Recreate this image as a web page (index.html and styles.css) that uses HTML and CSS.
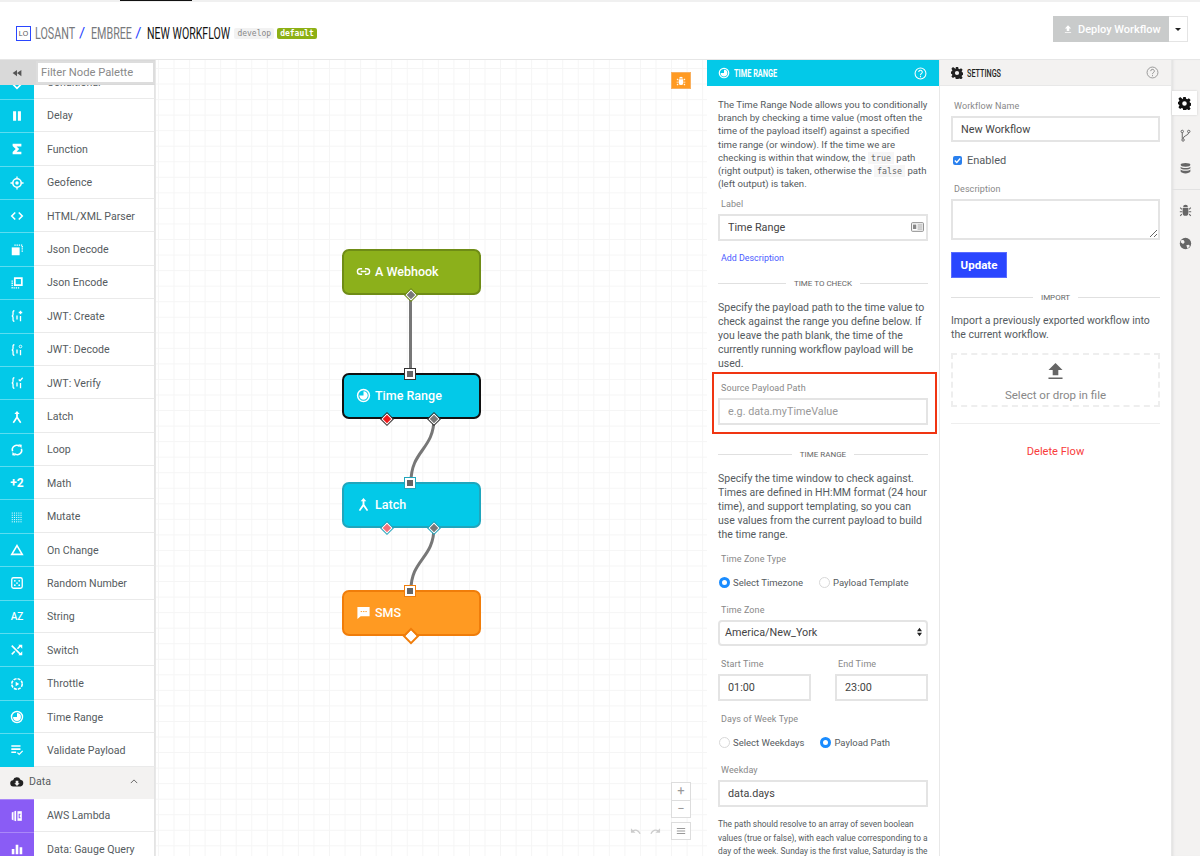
FILE: index.html
```html
<!DOCTYPE html>
<html lang="en">
<head>
<meta charset="utf-8">
<title>New Workflow</title>
<link rel="stylesheet" href="styles.css">
</head>
<body>
<header class="topbar">
  <div class="strip"><span class="strip-mark"></span></div>
  <div class="crumbs">
    <span class="logo">LO</span>
    <span class="crumb w-losant">LOSANT</span><span class="slash">/</span>
    <span class="crumb w-embree">EMBREE</span><span class="slash">/</span>
    <span class="crumb current w-new">NEW WORKFLOW</span>
    <span class="badge">develop</span>
    <span class="badge green">default</span>
  </div>
  <div class="deploy">
    <span class="deploy-btn"><svg class="ic10" viewBox="0 0 16 16"><path d="M8 2l5 5h-3v4H6V7H3zM3 13h10v1.5H3z" fill="#fff"/></svg>Deploy Workflow</span>
    <span class="deploy-caret"><svg class="caret" viewBox="0 0 8 4"><path d="M0 0h8L4 4z" fill="#222"/></svg></span>
  </div>
</header>
<main class="main">
  <aside class="palette">
    <div class="pal-tools">
      <span class="collapse"><svg class="ic10" viewBox="0 0 16 16"><path d="M8 3v10L1 8zM15 3v10L8 8z" fill="#555"/></svg></span>
      <input class="pal-filter" type="text" placeholder="Filter Node Palette">
    </div>
    <div class="pal-list">
      <div class="item"><span class="cell"><svg class="ic" viewBox="0 0 16 16"><path d="M8 2l6 6-6 6-6-6z" fill="none" stroke="#fff" stroke-width="2"/></svg></span>Conditional</div>
      <div class="item"><span class="cell"><svg class="ic" viewBox="0 0 16 16"><path d="M3.500 2.500h3.500v11h-3.500zM9 2.500h3.500v11H9z" fill="#fff"/></svg></span>Delay</div>
      <div class="item"><span class="cell"><svg class="ic" viewBox="0 0 16 16"><path d="M3 2h10v3H7.500l3 3-3 3H13v3H3v-2.500L6.500 8 3 4.500z" fill="#fff"/></svg></span>Function</div>
      <div class="item"><span class="cell"><svg class="ic" viewBox="0 0 16 16"><circle cx="8" cy="8" r="4.800" fill="none" stroke="#fff" stroke-width="1.800"/><circle cx="8" cy="8" r="2" fill="#fff"/><path d="M8 .5v2.500M8 13v2.500M.5 8H3M13 8h2.500" stroke="#fff" stroke-width="1.500"/></svg></span>Geofence</div>
      <div class="item"><span class="cell"><svg class="ic" viewBox="0 0 16 16"><path d="M6 4L2 8l4 4M10 4l4 4-4 4" fill="none" stroke="#fff" stroke-width="1.800"/></svg></span>HTML/XML Parser</div>
      <div class="item"><span class="cell"><svg class="ic" viewBox="0 0 16 16"><path d="M2 5h9v9H2z" fill="#fff"/><path d="M5 2.500h9v8.500" fill="none" stroke="#fff" stroke-width="1.500" stroke-dasharray="1.500 1"/></svg></span>Json Decode</div>
      <div class="item"><span class="cell"><svg class="ic" viewBox="0 0 16 16"><path d="M5.500 2.500h8v8h-8z" fill="none" stroke="#fff" stroke-width="2"/><path d="M2.500 5v8.500H11" fill="none" stroke="#fff" stroke-width="1.500" stroke-dasharray="1.500 1"/></svg></span>Json Encode</div>
      <div class="item"><span class="cell"><svg class="ic" viewBox="0 0 16 16"><use href="#brace"/><path d="M12 2v4M10 4h4M12 8v6" stroke="#fff" stroke-width="1.500"/></svg></span>JWT: Create</div>
      <div class="item"><span class="cell"><svg class="ic" viewBox="0 0 16 16"><use href="#brace"/><circle cx="12" cy="4" r="1.500" fill="none" stroke="#fff"/><path d="M12 8v6" stroke="#fff" stroke-width="1.500"/></svg></span>JWT: Decode</div>
      <div class="item"><span class="cell"><svg class="ic" viewBox="0 0 16 16"><use href="#brace"/><path d="M10 4l1.500 1.500L14.500 2M12 8v6" fill="none" stroke="#fff" stroke-width="1.500"/></svg></span>JWT: Verify</div>
      <div class="item"><span class="cell"><svg class="ic" viewBox="0 0 16 16"><use href="#latch"/></svg></span>Latch</div>
      <div class="item"><span class="cell"><svg class="ic" viewBox="0 0 16 16"><path d="M3 9.500A5 5 0 0 1 11 4M13 6.500A5 5 0 0 1 5 12" fill="none" stroke="#fff" stroke-width="1.800"/><path d="M9.500 1.500l4 .5-.5 4zM6.500 14.500l-4-.5.5-4z" fill="#fff"/></svg></span>Loop</div>
      <div class="item"><span class="cell cell-text">+2</span>Math</div>
      <div class="item"><span class="cell"><svg class="ic" viewBox="0 0 16 16"><path d="M2 3.500h12M2 6h12M2 8.500h12M2 11h12M2 13.500h12" stroke="#fff" stroke-width="1.100" stroke-dasharray="1.200 1.300"/></svg></span>Mutate</div>
      <div class="item"><span class="cell"><svg class="ic" viewBox="0 0 16 16"><path d="M8 3l6 10H2z" fill="none" stroke="#fff" stroke-width="1.800"/></svg></span>On Change</div>
      <div class="item"><span class="cell"><svg class="ic" viewBox="0 0 16 16"><rect x="2" y="2" width="12" height="12" rx="2" fill="none" stroke="#fff" stroke-width="1.500"/><path d="M5.500 5.500h.01M10.500 5.500h.01M8 8h.01M5.500 10.500h.01M10.500 10.500h.01" stroke="#fff" stroke-width="2" stroke-linecap="round"/></svg></span>Random Number</div>
      <div class="item"><span class="cell cell-text small">AZ</span>String</div>
      <div class="item"><span class="cell"><svg class="ic" viewBox="0 0 16 16"><path d="M2 3l10 10M2 13l3.500-3.500M8.500 6.500L12 3" fill="none" stroke="#fff" stroke-width="1.800"/><path d="M9.500 2H14v4.500zM9.500 14H14V9.500z" fill="#fff"/></svg></span>Switch</div>
      <div class="item"><span class="cell"><svg class="ic" viewBox="0 0 16 16"><circle cx="8" cy="8" r="6" fill="none" stroke="#fff" stroke-width="1.800" stroke-dasharray="3.500 1.200"/><path d="M6.500 5.500v5l4-2.500z" fill="#fff"/></svg></span>Throttle</div>
      <div class="item"><span class="cell"><svg class="ic" viewBox="0 0 16 16"><use href="#clock"/></svg></span>Time Range</div>
      <div class="item"><span class="cell"><svg class="ic" viewBox="0 0 16 16"><path d="M1.500 3.500H12M1.500 7H12M1.500 10.500H7" stroke="#fff" stroke-width="1.800"/><path d="M8.500 11l2 2 4-4" fill="none" stroke="#fff" stroke-width="1.500"/></svg></span>Validate Payload</div>
      <div class="group"><svg class="ic-data" viewBox="0 0 16 16"><path d="M4 13a3.500 3.500 0 0 1-.5-7A4.500 4.500 0 0 1 12 5.500 3.800 3.800 0 0 1 12 13z" fill="#222"/><path d="M6.500 6.500h3v3H11L8 12.500 5 9.500h1.500z" fill="#f3f2f1"/></svg><span class="group-name">Data</span><svg class="chev" viewBox="0 0 10 6"><path d="M1 5l4-4 4 4" fill="none" stroke="#666" stroke-width="1.200"/></svg></div>
      <div class="item data"><span class="cell"><svg class="ic" viewBox="0 0 16 16"><path d="M2 4l2-1v10l-2-1zM5 2.500l2-.5v12l-2-.5z" fill="#fff"/><path d="M8.500 2.500h5v11h-5z" fill="#fff"/><path d="M12 6H10.500v4H12" fill="none" stroke="#8a5cf5" stroke-width="1.200"/></svg></span>AWS Lambda</div>
      <div class="item data"><span class="cell"><svg class="ic" viewBox="0 0 16 16"><path d="M2 8h3v6H2zM6.500 3h3v11h-3zM11 6h3v8h-3z" fill="#fff"/></svg></span>Data: Gauge Query</div>
    </div>
  </aside>

  <section class="canvas">
    <svg class="wires" width="551" height="796" viewBox="0 0 551 796">
      <path d="M254.500 234V313M278 358C278 390 255 390 255 422M278 467C278 499 255 499 255 530" fill="none" stroke="#777" stroke-width="3"/>
    </svg>
    <div class="node webhook"><svg class="node-ic" viewBox="0 0 16 16"><path d="M6.500 5H4.500a3 3 0 0 0 0 6h2M9.500 5h2a3 3 0 0 1 0 6h-2M5 8h6" fill="none" stroke="#fff" stroke-width="1.500"/></svg>A Webhook<span class="port out mid"></span></div>
    <div class="node range"><svg class="node-ic" viewBox="0 0 16 16"><use href="#clock"/></svg>Time Range<span class="port in"></span><span class="port out left red"></span><span class="port out right"></span></div>
    <div class="node latch"><svg class="node-ic" viewBox="0 0 16 16"><use href="#latch"/></svg>Latch<span class="port in"></span><span class="port out left pink"></span><span class="port out right"></span></div>
    <div class="node sms"><svg class="node-ic" viewBox="0 0 16 16"><path d="M1.500 2h13v10H5l-3.500 3z" fill="#fff"/><path d="M5 7h1.500M7.500 7H9M10 7h1.500" stroke="#ff9a22"/></svg>SMS<span class="port in"></span><span class="port out mid blank"></span></div>
    <span class="bug-btn"><svg class="ic10" viewBox="0 0 16 16"><use href="#bug" fill="#fff"/></svg></span>
    <div class="zoom-box">
      <span class="zoom-key">+</span>
      <span class="zoom-key">−</span>
    </div>
    <div class="history">
      <svg class="hist-ic" viewBox="0 0 12 8"><path d="M11 7C9 3 6 2 3 4" fill="none" stroke="#ccc" stroke-width="1.500"/><path d="M1 1v5h5z" fill="#ccc"/></svg>
      <svg class="hist-ic" viewBox="0 0 12 8"><path d="M1 7C3 3 6 2 9 4" fill="none" stroke="#ccc" stroke-width="1.500"/><path d="M11 1v5H6z" fill="#ccc"/></svg>
      <span class="menu-key"><svg class="ic10" viewBox="0 0 12 10"><path d="M1 2h10M1 5h10M1 8h10" stroke="#999" stroke-width="1.300"/></svg></span>
    </div>
  </section>

  <section class="panel node-panel">
    <div class="panel-head cyan"><svg class="head-ic" viewBox="0 0 16 16"><use href="#clock"/></svg><span class="head-title">TIME RANGE</span><svg class="help" viewBox="0 0 16 16"><circle cx="8" cy="8" r="6.700" fill="none" stroke="#fff" stroke-width="1.300"/><path d="M5.800 6.300a2.200 2.200 0 1 1 3.300 1.900C8.300 8.700 8 9.100 8 10M8 11.200v1.400" fill="none" stroke="#fff" stroke-width="1.300"/></svg></div>
    <div class="panel-body np-body">
      <p class="para tight">The Time Range Node allows you to conditionally<br>branch by checking a time value (most often the<br>time of the payload itself) against a specified<br>time range (or window). If the time we are<br>checking is within that window, the <code>true</code> path<br>(right output) is taken, otherwise the <code>false</code> path<br>(left output) is taken.</p>
      <label class="lbl m8">Label</label>
      <div class="input-wrap">
        <input class="field" type="text" value="Time Range">
        <svg class="field-ic" viewBox="0 0 16 12"><rect x=".7" y=".7" width="14.600" height="10.600" rx="1" fill="none" stroke="#888" stroke-width="1.200"/><path d="M2.500 3h4v5.500h-4z" fill="#888"/><path d="M8 3.500h6M8 6h6M8 8.500h6" stroke="#888"/></svg>
      </div>
      <a class="add-desc">Add Description</a>
      <div class="divider m13"><span>TIME TO CHECK</span></div>
      <p class="para m12">Specify the payload path to the time value to<br>check against the range you define below. If<br>you leave the path blank, the time of the<br>currently running workflow payload will be<br>used.</p>
      <div class="callout">
        <label class="lbl">Source Payload Path</label>
        <input class="field" type="text" placeholder="e.g. data.myTimeValue">
      </div>
      <div class="divider m14"><span>TIME RANGE</span></div>
      <p class="para m12">Specify the time window to check against.<br>Times are defined in HH:MM format (24 hour<br>time), and support templating, so you can<br>use values from the current payload to build<br>the time range.</p>
      <label class="lbl m11">Time Zone Type</label>
      <div class="radios">
        <span class="radio-row"><span class="radio on"></span>Select Timezone</span>
        <span class="radio-row"><span class="radio"></span>Payload Template</span>
      </div>
      <label class="lbl m16">Time Zone</label>
      <div class="select">America/New_York<svg class="sel-arrows" viewBox="0 0 6 12"><path d="M0 5l3-4 3 4zM0 7l3 4 3-4z" fill="#222"/></svg></div>
      <div class="times">
        <div class="time-col"><label class="lbl">Start Time</label><input class="field" type="text" value="01:00"></div>
        <div class="time-col"><label class="lbl">End Time</label><input class="field" type="text" value="23:00"></div>
      </div>
      <label class="lbl m12">Days of Week Type</label>
      <div class="radios">
        <span class="radio-row"><span class="radio"></span>Select Weekdays</span>
        <span class="radio-row"><span class="radio on"></span>Payload Path</span>
      </div>
      <label class="lbl m16">Weekday</label>
      <input class="field" type="text" value="data.days">
      <p class="para note">The path should resolve to an array of seven boolean<br>values (true or false), with each value corresponding to a<br>day of the week. Sunday is the first value, Saturday is the</p>
    </div>
  </section>

  <section class="panel settings">
    <div class="panel-head grey"><svg class="head-ic" viewBox="0 0 16 16"><use href="#gear" fill="#222"/></svg><span class="head-title">SETTINGS</span><svg class="help" viewBox="0 0 16 16"><circle cx="8" cy="8" r="6.700" fill="none" stroke="#888" stroke-width="1"/><path d="M5.800 6.300a2.200 2.200 0 1 1 3.300 1.900C8.300 8.700 8 9.100 8 10M8 11.200v1.400" fill="none" stroke="#888" stroke-width="1.100"/></svg></div>
    <div class="panel-body st-body">
      <label class="lbl">Workflow Name</label>
      <input class="field" type="text" value="New Workflow">
      <div class="enabled"><span class="check"><svg viewBox="0 0 10 10"><path d="M2 5l2.200 2.200L8 2.800" fill="none" stroke="#fff" stroke-width="1.500"/></svg></span>Enabled</div>
      <label class="lbl m16">Description</label>
      <textarea class="area"></textarea>
      <button class="update" type="button">Update</button>
      <div class="divider m13"><span>IMPORT</span></div>
      <p class="para m11">Import a previously exported workflow into<br>the current workflow.</p>
      <div class="drop">
        <svg class="drop-ic" viewBox="0 0 16 18"><path d="M8 0l7.500 7.500H11V13H5V7.500H.5zM.5 15.500h15V17H.5z" fill="#666"/></svg>
        <span>Select or drop in file</span>
      </div>
      <hr class="rule">
      <a class="delete">Delete Flow</a>
    </div>
  </section>

  <nav class="rail">
    <span class="tab active"><svg class="rail-ic" viewBox="0 0 16 16"><use href="#gear" fill="#111"/></svg></span>
    <span class="tab"><svg class="rail-ic" viewBox="0 0 16 16"><circle cx="4" cy="3" r="1.500" fill="none" stroke="#666" stroke-width="1.200"/><circle cx="12" cy="3" r="1.500" fill="none" stroke="#666" stroke-width="1.200"/><circle cx="5" cy="13.500" r="1.500" fill="none" stroke="#666" stroke-width="1.200"/><path d="M4 4.500V12M12 4.500C12 8 5 8 5 12" fill="none" stroke="#666" stroke-width="1.200"/></svg></span>
    <span class="tab"><svg class="rail-ic" viewBox="0 0 16 16"><ellipse cx="8" cy="3.500" rx="6" ry="2.300" fill="#666"/><path d="M2 5.800c1 2 11 2 12 0v2c-1 2-11 2-12 0zM2 9.300c1 2 11 2 12 0v2.500c-1 3-11 3-12 0z" fill="#666"/></svg></span>
    <span class="rail-sep"></span>
    <span class="tab"><svg class="rail-ic" viewBox="0 0 16 16"><use href="#bug" fill="#666"/></svg></span>
    <span class="tab"><svg class="rail-ic" viewBox="0 0 16 16"><circle cx="8" cy="8" r="7" fill="#666"/><path d="M3 3.500l3 .5 1 2.500-2 2-3-2zM9 10l3-.5 1.500 1.500-3 3.500z" fill="#f3f2f1"/></svg></span>
  </nav>
</main>

<svg class="defs" width="0" height="0" aria-hidden="true">
  <symbol id="clock" viewBox="0 0 16 16">
    <circle cx="8" cy="8" r="6.300" fill="none" stroke="#fff" stroke-width="1.600"/>
    <path d="M8 3.500A4.500 4.500 0 1 1 3.500 8H8z" fill="#fff"/>
  </symbol>
  <symbol id="latch" viewBox="0 0 16 16">
    <path d="M8 1l3 3.500H9V8l4 6-1.500 1L8 10l-3.500 5L3 14l4-6V4.500H5z" fill="#fff"/>
  </symbol>
  <symbol id="brace" viewBox="0 0 16 16">
    <path d="M5 2C3 2 3.500 4 3.500 6S2 8 2 8s1.500 0 1.500 2-.5 4 1.500 4" fill="none" stroke="#fff" stroke-width="1.500"/>
    <path d="M8 5v.01M8 7.500V12" stroke="#fff" stroke-width="1.500"/>
  </symbol>
  <symbol id="gear" viewBox="0 0 16 16">
    <path fill-rule="evenodd" d="M6.500 0h3l.5 2.300 1.400.6 2-1.300 2.100 2.100-1.300 2 .6 1.400 2.200.4v3l-2.200.5-.6 1.400 1.300 2-2.100 2.100-2-1.300-1.400.6-.5 2.200h-3L6 14l-1.400-.6-2 1.300-2.100-2.100 1.300-2L1.200 9.200 0 9V6l1.200-.4.6-1.400-1.300-2L2.600.1l2 1.300L6 2.800zM8 5.200a2.800 2.800 0 1 0 0 5.600 2.800 2.800 0 0 0 0-5.600z"/>
  </symbol>
  <symbol id="bug" viewBox="0 0 16 16">
    <path d="M5 4a3 3 0 0 1 6 0zM4.500 5h7v6a3.500 3.500 0 0 1-7 0zM1 5l1-1 2 2-1 1zM15 5l-1-1-2 2 1 1zM1 9h3v1.300H1zM12 9h3v1.300h-3zM1 14l2-2 1 1-2 2zM15 14l-2-2-1 1 2 2z"/>
  </symbol>
</svg>
</body>
</html>
```

FILE: styles.css
```css
* { box-sizing: border-box; }
html, body { margin: 0; height: 100%; overflow: hidden; }
body {
  display: flex;
  flex-direction: column;
  height: 856px;
  font-family: Roboto, "Open Sans", "Liberation Sans", sans-serif;
  font-size: 11px;
  color: #555b60;
  background: #fff;
}
.defs { position: absolute; }

/* top bar */
.topbar {
  position: relative;
  flex: 0 0 60px;
  display: flex;
  align-items: center;
  justify-content: space-between;
  padding: 0 12px 0 16px;
  border-bottom: 1px solid #e6e6e6;
}
.strip { position: absolute; left: 0; right: 0; top: 0; height: 2px; background: #f0f0f0; }
.strip-mark { display: block; margin-left: 120px; width: 72px; height: 1px; background: #111; }
.crumbs { display: flex; align-items: center; margin-top: 7px; }
.logo {
  display: inline-flex; align-items: center; justify-content: center;
  width: 15px; height: 15px; margin-right: 4px;
  border: 1.500px solid #2a46ff; color: #555;
  font: 7px "Liberation Sans", sans-serif;
}
.crumb {
  display: inline-block; white-space: nowrap;
  font: 16px Roboto, sans-serif; color: #77797c;
  transform: scaleX(.67); transform-origin: left center;
}
.crumb.current { color: #111; }
.w-losant { width: 39px; }
.w-embree { width: 39px; }
.w-new { width: 84px; transform: scaleX(.66); }
.slash { font: 15px Roboto, sans-serif; color: #2a46ff; margin: 0 6px 0 5px; }
.badge {
  margin-left: 3px; padding: 0 3px; height: 11px;
  font: 8px/11px "DejaVu Sans Mono", "Liberation Mono", monospace;
  background: #f2f2f2; color: #888; border-radius: 2px;
}
.badge.green { background: #8db015; color: #fff; font-weight: bold; }
.deploy { display: flex; height: 26px; margin-top: -1px; }
.deploy-btn {
  display: flex; align-items: center; gap: 5px; padding: 0 9px 0 10px; width: 116px;
  background: #c9cbcb; color: #fff; font-weight: 500; font-size: 11px; white-space: nowrap;
}
.deploy-caret {
  display: flex; align-items: center; justify-content: center; width: 19px;
  border: 1px solid #e4e4e4; border-left: 0;
}
.caret { width: 6px; height: 3px; }
.ic10 { width: 10px; height: 10px; flex: none; }

/* main */
.main { flex: 1; display: flex; min-height: 0; }

/* palette */
.palette { flex: 0 0 156px; display: flex; flex-direction: column; overflow: hidden; border-right: 1px solid #e8e8e8; position: relative; }
.pal-tools { position: relative; z-index: 2; flex: 0 0 25px; display: flex; background: #d9d9d9; }
.collapse { flex: 0 0 36px; display: flex; align-items: center; justify-content: center; padding-right: 3px; }
.pal-filter {
  width: 119px; height: 23px; margin-top: 1px; padding: 0 3px;
  border: 2px solid #ddd; background: #fff; outline: 0;
  font: 11.200px Roboto, sans-serif; color: #555;
}
.pal-filter::placeholder { color: #8a8a8a; }
.pal-list { margin-top: -19.600px; width: 155px; }
.item {
  display: flex; align-items: center; height: 33.400px; padding-top: 2px;
  border-bottom: 1px solid #eaeaea; border-right: 1px solid #e4e4e4;
  color: #555b60; font-size: 10.600px; white-space: nowrap; background: #fff;
}
.cell {
  flex: 0 0 34px; align-self: stretch; margin: -2px 13px -1px 0;
  display: flex; align-items: center; justify-content: center;
  background: #03c9e8; border-top: 1px solid #5ddcf0; color: #fff;
}
.cell-text { font-weight: 700; font-size: 12px; }
.cell-text.small { font-size: 10px; font-weight: 500; }
.item.data .cell { background: #8a5cf5; border-top-color: #a988f8; }
.ic { width: 14px; height: 14px; }
.group {
  display: flex; align-items: center; height: 32px; padding: 0 16px 2px 10px;
  background: #f3f2f1; border-right: 1px solid #e4e4e4; font-size: 10.600px;
}
.ic-data { width: 14px; height: 14px; }
.group-name { flex: 1; margin-left: 5px; }
.chev { width: 8px; height: 5px; }

/* canvas */
.canvas {
  position: relative; flex: 0 0 551px; overflow: hidden;
  background-color: #fff;
  background-image: linear-gradient(#f5f5f5 1px, transparent 1px), linear-gradient(90deg, #f5f5f5 1px, transparent 1px);
  background-size: 15.550px 15.550px;
  background-position: 2px 8px;
}
.wires { position: absolute; left: 0; top: 0; z-index: 1; }
.node {
  position: absolute; left: 186px; width: 139px; height: 46px;
  display: flex; align-items: center; padding: 0 0 2px 12px;
  border: 2px solid; border-radius: 7px;
  color: #fff; font-weight: 500; font-size: 12.500px;
}
.node-ic { width: 15px; height: 15px; margin-right: 4px; flex: none; }
.webhook { top: 189px; background: #8cb01b; border-color: #6f8c16; }
.range { top: 313px; background: #03c9e8; border-color: #111; }
.latch { top: 422px; background: #03c9e8; border-color: #20a6bd; }
.sms { top: 530px; background: #ff9a22; border-color: #f07d0a; }
.port { position: absolute; width: 8px; height: 8px; z-index: 2; border: 1.500px solid #fff; background: #777; }
.port.in { left: 61px; top: -6px; width: 10px; height: 10px; border-width: 2px; background: #666; outline: 1px solid #333; }
.latch .port.in { outline-color: #20a6bd; }
.sms .port.in { outline-color: #f07d0a; }
.port.out { bottom: -6px; transform: rotate(45deg); outline: 1px solid #333; }
.webhook .port.out { outline-color: #6f8c16; }
.latch .port.out { outline-color: #20a6bd; }
.sms .port.out { outline-color: #f07d0a; }
.port.mid { left: 63px; }
.port.left { left: 39px; }
.port.right { left: 86px; }
.port.red { background: #f01818; }
.port.pink { background: #f0707a; }
.port.blank { background: #fff; outline-width: 2px; }
.bug-btn {
  position: absolute; left: 515px; top: 12px; width: 20px; height: 17px;
  display: flex; align-items: center; justify-content: center;
  background: #ff9a22; border: 1px solid #f8b060;
}
.zoom-box {
  position: absolute; left: 515px; top: 722px; width: 20px;
  display: flex; flex-direction: column; background: #fff; border: 1px solid #ddd;
}
.zoom-key { height: 17px; line-height: 16px; text-align: center; font-size: 13px; color: #999; }
.zoom-key + .zoom-key { border-top: 1px solid #ddd; }
.history { position: absolute; left: 474px; top: 762px; display: flex; align-items: center; gap: 9px; }
.hist-ic { width: 11px; height: 8px; }
.menu-key {
  display: flex; align-items: center; justify-content: center;
  width: 20px; height: 18px; margin-left: 1px; border: 1px solid #ddd; background: #fff;
}

/* panels */
.panel { flex: 0 0 232px; display: flex; flex-direction: column; overflow: hidden; background: #fff; border-right: 1px solid #e8e8e8; }
.node-panel { flex-basis: 233px; }
.panel-head { flex: 0 0 26px; display: flex; align-items: center; padding: 0 11px; }
.panel-head.cyan { background: #03c9e8; color: #fff; }
.panel-head.grey { background: #f3f2f1; color: #222; border-bottom: 1px solid #e8e8e8; }
.head-ic { width: 12px; height: 12px; margin-right: 4px; }
.head-title {
  display: block; flex: 1; white-space: nowrap;
  font: 700 11.500px Roboto, sans-serif;
  transform: scaleX(.64); transform-origin: left center;
}
.grey .head-title { font-weight: 500; transform: scaleX(.63); }
.help { width: 13px; height: 13px; margin-right: 1px; }
.panel-body { padding: 0 11px; }
.np-body { padding-top: 12px; }
.st-body { padding-top: 13px; }

.para { margin: 0; font-size: 10.500px; line-height: 14px; white-space: nowrap; color: #555b60; }
.para.tight { line-height: 13.200px; font-size: 9.600px; }
.para code {
  font: 8.300px "DejaVu Sans Mono", monospace; padding: 1px 3px; background: #f6f6f6; color: #666;
}
.para.note { margin-top: 11px; font-size: 8.400px; line-height: 13.200px; }
.m8 { margin-top: 8px; }
.m11 { margin-top: 11px; }
.m12 { margin-top: 12px; }
.m13 { margin-top: 13px; }
.m14 { margin-top: 14px; }
.m16 { margin-top: 16px; }
.lbl { display: block; height: 12px; padding-left: 3px; line-height: 14px; font-size: 9px; letter-spacing: .1px; color: #888; white-space: nowrap; }
.np-body .lbl { line-height: 12px; }
.field {
  display: block; width: 100%; height: 27px; margin-top: 4px; padding: 0 8px;
  border: 2px solid #e4e4e4; background: #fff; outline: 0; border-radius: 0;
  font: 10.800px Roboto, sans-serif; color: #444;
}
.field::placeholder { color: #999; }
.input-wrap { position: relative; }
.field-ic { position: absolute; right: 4px; top: 8px; width: 13px; height: 10px; }
.add-desc { display: block; margin-top: 11px; padding-left: 3px; line-height: 12px; height: 12px; font-size: 8.900px; color: #4a5cff; }
.divider { display: flex; align-items: center; gap: 8px; height: 12px; font-size: 8px; color: #666; white-space: nowrap; }
.divider::before, .divider::after { content: ""; flex: 1; height: 1px; background: #e0e0e0; }
.callout {
  margin: 1px -9px 0 -6px; padding: 8px 7px 7px 4px;
  border: 2px solid #f03512;
}
.radios { display: flex; gap: 16px; height: 12px; margin-top: 11px; padding-left: 1px; font-size: 9.500px; }
.radio-row { display: flex; align-items: center; gap: 3px; white-space: nowrap; color: #555b60; }
.radio { width: 11px; height: 11px; border: 1px solid #d8d8d8; border-radius: 50%; background: #fff; }
.radio.on { border: 3.500px solid #1a8cff; background: #fff; }
.select {
  position: relative; height: 26px; margin-top: 4px; padding: 0 5px; line-height: 21px;
  border: 2px solid #e4e4e4; border-radius: 4px; font-size: 10.800px; color: #444;
}
.sel-arrows { position: absolute; right: 4px; top: 5px; width: 5px; height: 10px; }
.times { display: flex; gap: 24px; margin-top: 12px; }
.time-col { flex: 0 0 93px; }

.enabled { display: flex; align-items: center; height: 12px; gap: 5px; margin-top: 12px; padding-left: 2px; font-size: 11px; white-space: nowrap; }
.check { display: inline-flex; width: 9px; height: 9px; background: #2a80ee; border-radius: 2px; }
.check svg { width: 9px; height: 9px; }
.area {
  display: block; width: 100%; height: 41px; margin-top: 5px;
  border: 2px solid #e4e4e4; outline: 0; resize: vertical; background: #fff;
}
.st-body .field { margin-top: 5px; height: 26px; }
.update {
  display: block; width: 56px; height: 26px; margin-top: 12px; padding: 0;
  border: 1px solid #5a6cff; background: #2a46ff; color: #fff;
  font: 700 11.500px Roboto, sans-serif;
}
.drop {
  display: flex; flex-direction: column; align-items: center;
  height: 54px; margin-top: 11px; padding-top: 7px;
  border: 2px dashed #eeeeee; color: #888; font-size: 11.500px; white-space: nowrap;
}
.drop-ic { width: 15px; height: 19px; margin-bottom: 7px; }
.rule { height: 1px; margin: 16px 0 0; border: 0; background: #eee; }
.delete { display: block; margin-top: 21px; text-align: center; line-height: 14px; color: #f83c3c; font-size: 11.100px; }

/* rail */
.rail {
  flex: 0 0 28px; display: flex; flex-direction: column; padding-top: 31px;
  background: #f3f2f1; box-shadow: inset 3px 0 3px -2px #ddd;
}
.tab { display: flex; align-items: center; justify-content: center; height: 24px; margin-bottom: 9px; padding-right: 2px; }
.tab.active { background: #fff; margin-right: 3px; margin-bottom: 8px; padding-right: 0; box-shadow: 0 0 2px #ccc; }
.rail-ic { width: 13px; height: 13px; }
.rail-sep { height: 1px; margin: 0 0 8px; background: #e2e2e2; }
```
